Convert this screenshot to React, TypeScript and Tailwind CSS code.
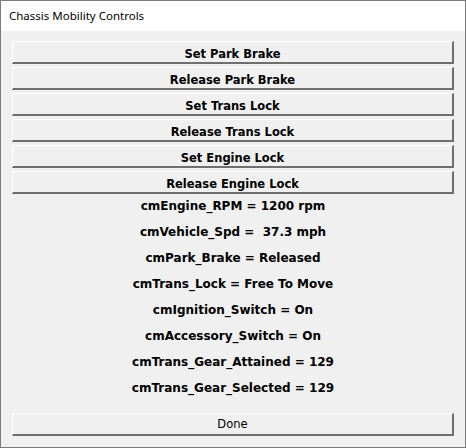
const actions = [
  "Set Park Brake",
  "Release Park Brake",
  "Set Trans Lock",
  "Release Trans Lock",
  "Set Engine Lock",
  "Release Engine Lock",
];

const readouts = [
  "cmEngine_RPM = 1200 rpm",
  "cmVehicle_Spd =  37.3 mph",
  "cmPark_Brake = Released",
  "cmTrans_Lock = Free To Move",
  "cmIgnition_Switch = On",
  "cmAccessory_Switch = On",
  "cmTrans_Gear_Attained = 129",
  "cmTrans_Gear_Selected = 129",
];

function ClassicButton({ label, bold }: { label: string; bold?: boolean }) {
  return (
    <button
      className={
        "h-[23px] w-full bg-[#f0f0f0] border-t border-l border-t-white border-l-white border-b-2 border-r-2 border-b-[#6e6e6e] border-r-[#6e6e6e] text-black text-center leading-none text-[11.5px] " +
        (bold ? "font-bold pt-[5px]" : "pt-[2px]")
      }
      style={{ fontFamily: "Tahoma, 'DejaVu Sans', sans-serif", whiteSpace: "pre" }}
    >
      {label}
    </button>
  );
}

export default function App() {
  return (
    <div className="w-[466px] h-[448px] flex flex-col border border-[#7a7a7a] bg-[#f0f0f0] overflow-hidden">
      <div
        className="h-[30px] shrink-0 bg-white flex items-center pl-[8px] text-[11.5px] text-black"
        style={{ fontFamily: "'Noto Sans', 'Open Sans', sans-serif" }}
      >
        Chassis Mobility Controls
      </div>
      <div className="flex-1 flex flex-col px-[11px] pt-[10px]">
        <div className="flex flex-col gap-[3px]">
          {actions.map((a) => (
            <ClassicButton key={a} label={a} bold />
          ))}
        </div>
        <div
          className="flex flex-col -mt-[1px] font-bold text-[12px] text-black"
          style={{ fontFamily: "Tahoma, 'DejaVu Sans', sans-serif", whiteSpace: "pre" }}
        >
          {readouts.map((r) => (
            <div key={r} className="h-[26px] flex items-center justify-center">
              {r}
            </div>
          ))}
        </div>
        <div className="mt-auto mb-[11px]">
          <ClassicButton label="Done" />
        </div>
      </div>
    </div>
  );
}
